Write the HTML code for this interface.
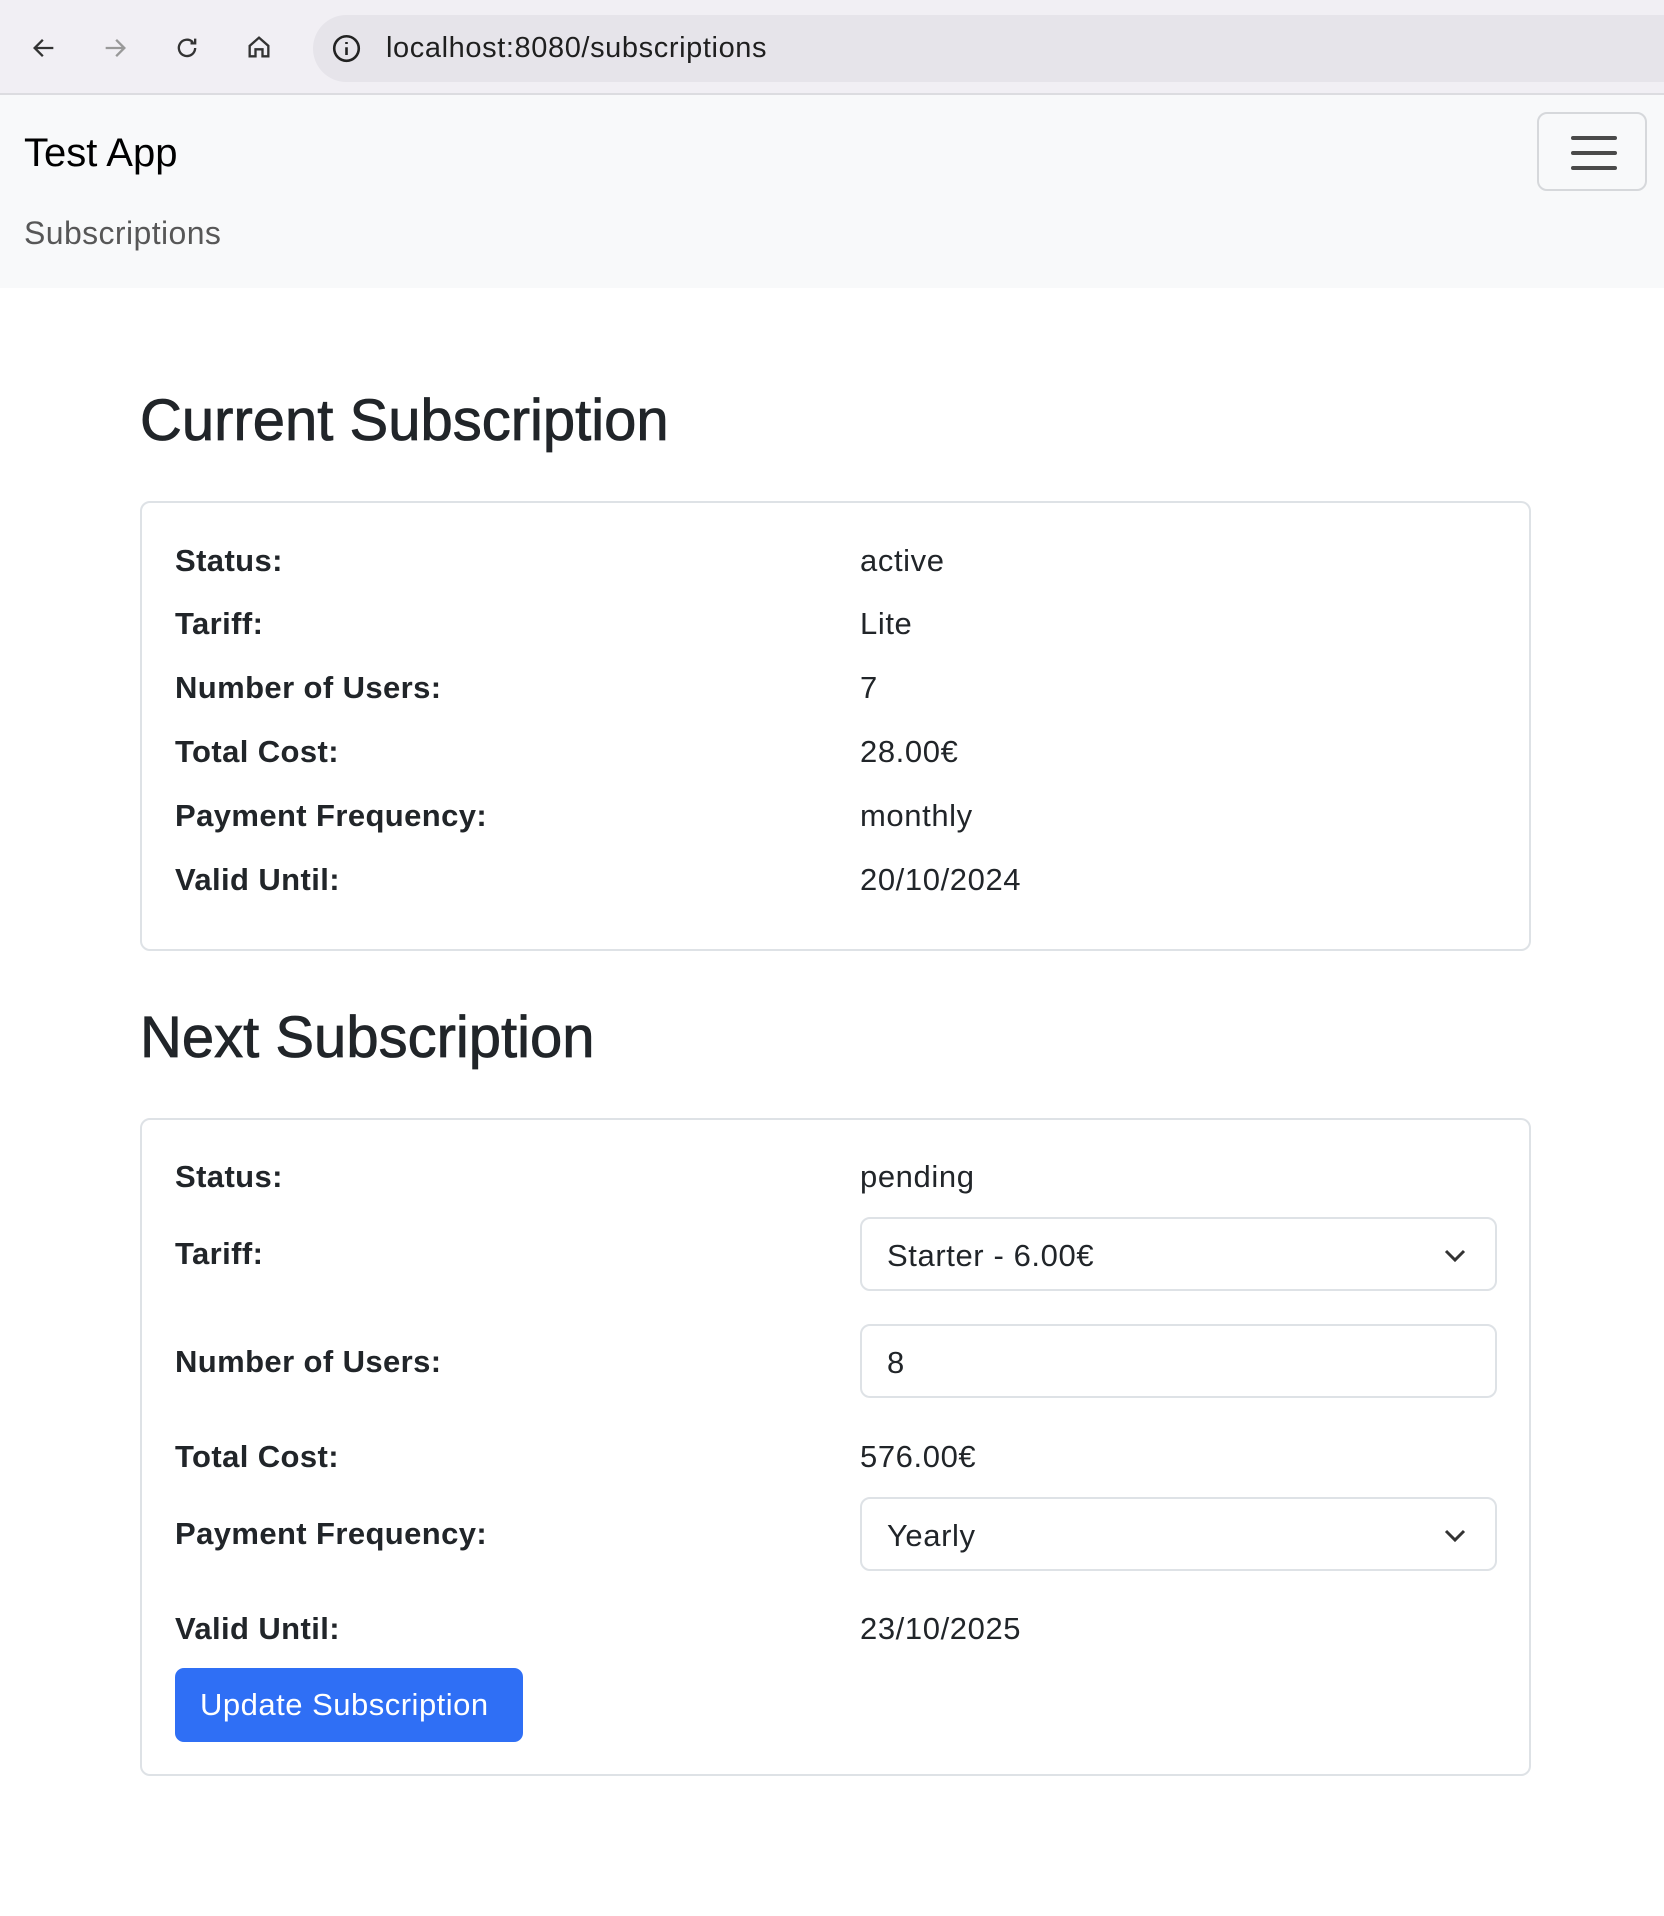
<!DOCTYPE html>
<html><head><meta charset="utf-8"><style>
*{box-sizing:border-box;margin:0;padding:0}
html,body{width:1664px;height:1916px;background:#fff;font-family:"Liberation Sans",Arial,sans-serif;color:#212529;overflow:hidden}
.chrome{position:absolute;left:0;top:0;width:1664px;height:95px;background:#f1eff4;border-bottom:2px solid #dcdce0}
.url{position:absolute;left:313px;top:15px;width:1400px;height:67px;border-radius:34px;background:#e6e4ea}
.url span{position:absolute;left:73px;top:17px;font-size:29px;letter-spacing:0.6px;color:#1f1f1f}
.nav{position:absolute;left:0;top:95px;width:1664px;height:193px;background:#f8f9fa}
.brand{position:absolute;left:24px;top:131px;font-size:40px;color:#000}
.link{position:absolute;left:24px;top:215px;font-size:32px;letter-spacing:0.4px;color:rgba(0,0,0,.65)}
.tog{position:absolute;left:1537px;top:112px;width:110px;height:79px;border:2px solid #d6d8db;border-radius:10px}
.tog i{position:absolute;left:32px;width:46px;height:4px;background:#4a4a4a;border-radius:2px}
h2{position:absolute;left:140px;font-size:58px;font-weight:500;line-height:1;-webkit-text-stroke:0.8px #212529}
.card{position:absolute;left:140px;width:1391px;border:2px solid #dee2e6;border-radius:10px}
.l{position:absolute;left:175px;font-size:31px;font-weight:bold;line-height:1;letter-spacing:0.4px}
.v{position:absolute;left:860px;font-size:31px;line-height:1;letter-spacing:0.6px}
.f{position:absolute;left:860px;width:637px;height:74px;border:2px solid #dee2e6;border-radius:10px;font-size:31px;letter-spacing:0.6px;padding:19px 0 0 25px}
.f svg{position:absolute;right:28px;top:27px}
.btn{position:absolute;left:175px;top:1668px;width:348px;height:74px;background:#2f6ff5;border-radius:9px;color:#fff;font-size:31px;letter-spacing:0.5px;padding:19px 0 0 25px}
</style></head><body>
<div class="chrome">
<svg style="position:absolute;left:30px;top:34px" width="28" height="28" viewBox="0 0 24 24" fill="none" stroke="#333" stroke-width="2"><path d="M20 12H5M11 5l-7 7 7 7"/></svg>
<svg style="position:absolute;left:101px;top:34px" width="28" height="28" viewBox="0 0 24 24" fill="none" stroke="#999" stroke-width="2"><path d="M4 12h15M13 5l7 7-7 7"/></svg>
<svg style="position:absolute;left:173px;top:34px" width="28" height="28" viewBox="0 0 24 24" fill="none" stroke="#333" stroke-width="2"><path d="M19 12a7 7 0 1 1-2-5M19 4v4h-4"/></svg>
<svg style="position:absolute;left:245px;top:33px" width="28" height="28" viewBox="0 0 24 24" fill="none" stroke="#333" stroke-width="2"><path d="M4 11l8-7 8 7v9h-5v-6h-6v6H4z"/></svg>
<div class="url"><svg style="position:absolute;left:18px;top:18px" width="31" height="31" viewBox="0 0 24 24" fill="none" stroke="#222" stroke-width="2"><circle cx="12" cy="12" r="9.5"/><path d="M12 11v6M12 7v1.5"/></svg><span>localhost:8080/subscriptions</span></div>
</div>
<div class="nav"></div>
<div class="brand">Test App</div>
<div class="link">Subscriptions</div>
<div class="tog"><i style="top:22px"></i><i style="top:37px"></i><i style="top:52px"></i></div>

<h2 style="top:392px">Current Subscription</h2>
<div class="card" style="top:501px;height:450px"></div>
<div class="l" style="top:545px">Status:</div><div class="v" style="top:545px">active</div>
<div class="l" style="top:608px">Tariff:</div><div class="v" style="top:608px">Lite</div>
<div class="l" style="top:672px">Number of Users:</div><div class="v" style="top:672px">7</div>
<div class="l" style="top:736px">Total Cost:</div><div class="v" style="top:736px">28.00€</div>
<div class="l" style="top:800px">Payment Frequency:</div><div class="v" style="top:800px">monthly</div>
<div class="l" style="top:864px">Valid Until:</div><div class="v" style="top:864px">20/10/2024</div>

<h2 style="top:1009px">Next Subscription</h2>
<div class="card" style="top:1118px;height:658px"></div>
<div class="l" style="top:1161px">Status:</div><div class="v" style="top:1161px">pending</div>
<div class="l" style="top:1238px">Tariff:</div>
<div class="f" style="top:1217px">Starter - 6.00€<svg width="24" height="18" viewBox="0 0 24 18" fill="none" stroke="#333" stroke-width="3"><path d="M3 5l9 9 9-9"/></svg></div>
<div class="l" style="top:1346px">Number of Users:</div>
<div class="f" style="top:1324px">8</div>
<div class="l" style="top:1441px">Total Cost:</div><div class="v" style="top:1441px">576.00€</div>
<div class="l" style="top:1518px">Payment Frequency:</div>
<div class="f" style="top:1497px">Yearly<svg width="24" height="18" viewBox="0 0 24 18" fill="none" stroke="#333" stroke-width="3"><path d="M3 5l9 9 9-9"/></svg></div>
<div class="l" style="top:1613px">Valid Until:</div><div class="v" style="top:1613px">23/10/2025</div>
<div class="btn">Update Subscription</div>
</body></html>
